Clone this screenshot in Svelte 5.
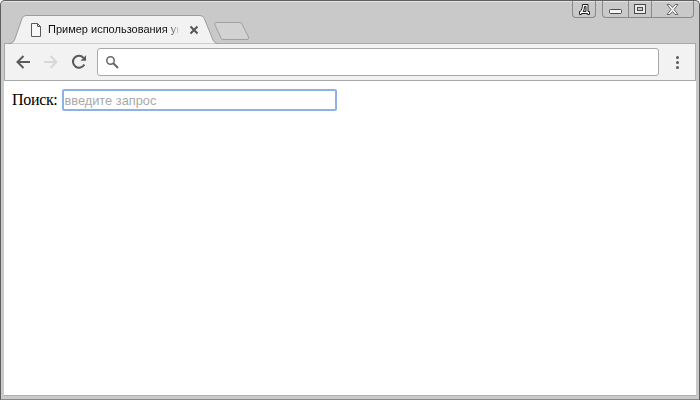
<script>
  let query = $state('');
</script>

<div class="window">
  <div class="tabstrip">
    <div class="tab">
      <svg class="tab-shape" width="210" height="30" viewBox="0 0 210 30">
        <path d="M0 28.500 H2 Q5 28.500 6.500 25 L14 3.500 Q15 .5 18 .5 H192 Q195 .5 196.300 3.500 L205 25 Q207 28.500 209 28.500" fill="#f2f2f2" stroke="#9c9c9c" />
      </svg>
      <svg class="page-icon" width="12" height="14" viewBox="0 0 12 14">
        <path d="M1.500 .5 H7.500 L10.500 3.500 V13.500 H1.500 Z M7.500 .5 V3.500 H10.500" fill="#f8f8f8" stroke="#5a5a5a" />
      </svg>
      <span class="tab-title">Пример использования уни</span>
      <svg class="tab-close" width="10" height="10" viewBox="0 0 10 10">
        <path d="M1.500 1.500 L8.500 8.500 M8.500 1.500 L1.500 8.500" stroke="#555" stroke-width="2" />
      </svg>
    </div>
    <svg class="new-tab" width="36" height="18" viewBox="0 0 36 18">
      <path d="M1.500 .5 H26 Q27.500 .5 28 2 L34.500 15 Q35 17.500 33 17.500 H9 Q7.500 17.500 7 16 L.8 2.500 Q.3 .5 1.500 .5 Z" fill="#d2d2d2" stroke="#a0a0a0" />
    </svg>
    <div class="captions">
      <div class="cap cap-lang">
        <svg width="11" height="11" viewBox="0 0 11 11">
          <path d="M3.500 .5 H9 V7.500 H10.500 V10.500 H8.500 V9.500 H2.500 V10.500 H.5 V7.500 H1.300 C2.500 6 3.500 4 3.500 .5 Z M5.500 2.500 C5.500 4.500 5 6 4.200 7.500 H7 V2.500 Z" fill="#fff" fill-rule="evenodd" stroke="#222" />
        </svg>
      </div>
      <div class="cap-group">
        <div class="cap cap-min">
          <svg width="13" height="5" viewBox="0 0 13 5">
            <rect x=".5" y=".5" width="12" height="4" rx="1" fill="#f4f4f4" stroke="#4c4c4c" />
          </svg>
        </div>
        <div class="cap cap-max">
          <svg width="12" height="10" viewBox="0 0 12 10">
            <rect x=".5" y=".5" width="11" height="9" fill="#e8e8e8" stroke="#4c4c4c" />
            <rect x="3.500" y="3.500" width="5" height="3" fill="#c8c8c8" stroke="#4c4c4c" />
          </svg>
        </div>
        <div class="cap cap-close">
          <svg width="13" height="11" viewBox="0 0 13 11">
            <path d="M1 .5 H4 L6.500 3.500 L9 .5 H12 L8 5.500 L12 10.500 H9 L6.500 7.500 L4 10.500 H1 L5 5.500 Z" fill="#f2f2f2" stroke="#6a6a6a" />
          </svg>
        </div>
      </div>
    </div>
  </div>

  <div class="toolbar">
    <svg class="nav" width="16" height="16" viewBox="0 0 16 16">
      <path d="M15 8 H2.500 M8.500 2 L2.500 8 L8.500 14" fill="none" stroke="#5a5a5a" stroke-width="2" />
    </svg>
    <svg class="nav" width="16" height="16" viewBox="0 0 16 16">
      <path d="M1 8 H13.500 M7.500 2 L13.500 8 L7.500 14" fill="none" stroke="#d8d8d8" stroke-width="2" />
    </svg>
    <svg class="nav" width="16" height="16" viewBox="0 0 16 16">
      <path d="M13.300 10.500 A6 6 0 1 1 12.500 3.800" fill="none" stroke="#5a5a5a" stroke-width="2" />
      <path d="M9.500 6.800 H15 V1.300 Z" fill="#5a5a5a" />
    </svg>
    <div class="omnibox">
      <svg width="14" height="14" viewBox="0 0 14 14">
        <circle cx="5.500" cy="5.500" r="3.700" fill="none" stroke="#666" stroke-width="1.500" />
        <path d="M8.300 8.300 L13 13" stroke="#666" stroke-width="2" />
      </svg>
    </div>
    <div class="menu"><i></i><i></i><i></i></div>
  </div>

  <main class="page">
    <label class="search">
      <span>Поиск:</span>
      <input type="text" placeholder="введите запрос" bind:value={query} />
    </label>
  </main>
</div>

<style>
  :global(body) { margin: 0; }
  .window {
    box-sizing: border-box;
    width: 700px;
    height: 400px;
    display: flex;
    flex-direction: column;
    padding: 0 3px 3px;
    background: #c9c9c9;
    border: 1px solid #5e5e5e;
    border-bottom-color: #8a8a8a;
    border-radius: 5px 5px 0 0;
    box-shadow: inset 0 1px 0 #e4e4e4;
  }
  .tabstrip {
    height: 43px;
    flex: none;
    display: flex;
    align-items: flex-start;
    position: relative;
  }
  .tab {
    position: relative;
    width: 208px;
    height: 30px;
    margin: 14px 0 0 4px;
    display: flex;
    align-items: center;
    font: 11px/16px "Liberation Sans", Arial, sans-serif;
    color: #111;
  }
  .tab-shape { position: absolute; left: 0; top: 0; }
  .page-icon { position: relative; margin-left: 22px; flex: none; }
  .tab-title {
    position: relative;
    width: 132px;
    margin: 0 0 2px 6px;
    flex: none;
    white-space: nowrap;
    overflow: hidden;
    -webkit-mask-image: linear-gradient(to right, #000 120px, transparent 132px);
    mask-image: linear-gradient(to right, #000 120px, transparent 132px);
  }
  .tab-close { position: relative; margin-left: 9px; flex: none; }
  .new-tab { margin: 21px 0 0 -2px; flex: none; }
  .captions {
    margin-left: auto;
    margin-right: 2px;
    display: flex;
    gap: 6px;
  }
  .cap {
    height: 16px;
    display: flex;
    align-items: center;
    justify-content: center;
    box-sizing: border-box;
  }
  .cap-lang, .cap-group {
    border: 1px solid #8a8a8a;
    border-top: 0;
    border-radius: 0 0 4px 4px;
  }
  .cap-lang { width: 24px; height: 17px; }
  .cap-group { display: flex; }
  .cap-min { width: 25px; align-items: flex-end; padding-bottom: 3px; }
  .cap-max { width: 24px; border-left: 1px solid #8a8a8a; border-right: 1px solid #8a8a8a; }
  .cap-close { width: 41px; }
  .toolbar {
    height: 38px;
    flex: none;
    box-sizing: border-box;
    display: flex;
    align-items: center;
    margin-top: -1px;
    padding-left: 10px;
    background: #f2f2f2;
    border: 1px solid #a8a8a8;
  }
  .nav { flex: none; margin-right: 12px; }
  .omnibox {
    box-sizing: border-box;
    width: 562px;
    height: 28px;
    margin-left: -2px;
    padding-left: 7px;
    display: flex;
    align-items: center;
    background: #fff;
    border: 1px solid #a9a9a9;
    border-radius: 3px;
  }
  .menu {
    margin-left: 17px;
    display: flex;
    flex-direction: column;
    gap: 2px;
  }
  .menu i {
    display: block;
    width: 3px;
    height: 3px;
    border-radius: 50%;
    background: #5a5a5a;
  }
  .page {
    flex: 1;
    background: #fff;
    padding: 8px;
    font: 16px "Liberation Serif", "Times New Roman", serif;
    color: #000;
    border-bottom: 1px solid #b0b0b0;
  }
  .search { display: flex; align-items: center; gap: 5px; }
  .search span { letter-spacing: -0.33px; }
  input {
    box-sizing: border-box;
    width: 275px;
    height: 22px;
    padding: 1px 0;
    border: 2px solid #8fb1ea;
    border-radius: 2px;
    outline: none;
    font: 12.8px "Liberation Sans", Arial, sans-serif;
    background: #fff;
  }
  input::placeholder { color: #a9a9a9; opacity: 1; }
</style>
